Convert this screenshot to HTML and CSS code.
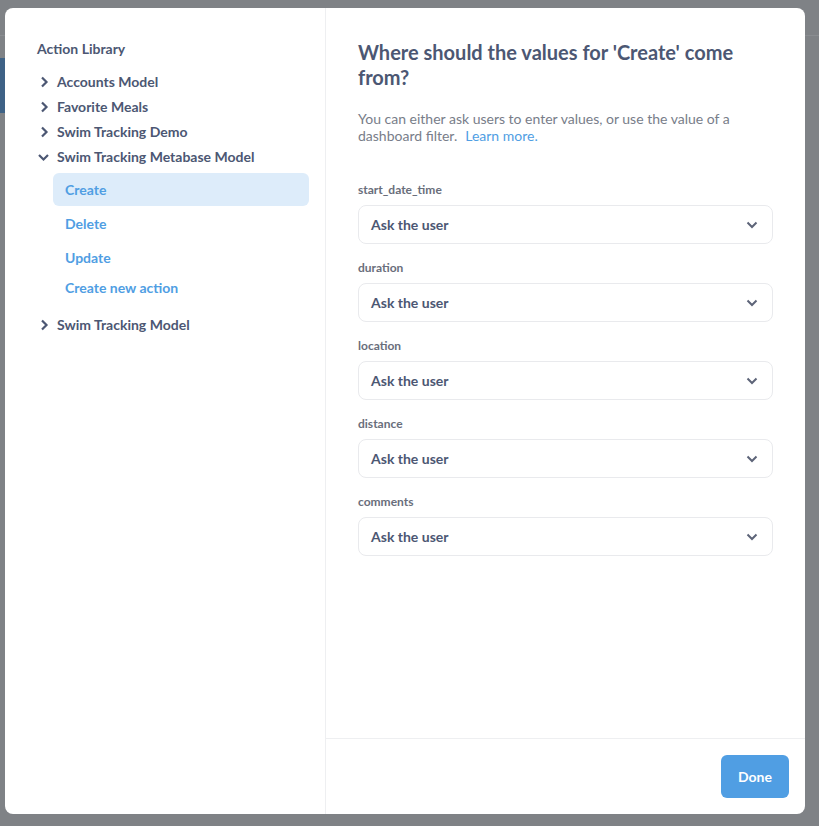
FILE: index.html
```html
<!DOCTYPE html>
<html>
<head>
<meta charset="utf-8">
<link rel="stylesheet" href="styles.css">
</head>
<body>
<div class="modal">
  <aside class="sidebar">
    <div class="sidebar-title">Action Library</div>
    <ul class="tree">
      <li class="tree-row"><svg class="chev" viewBox="0 0 12 12"><path d="M5 1.5l4.5 4.5-4.5 4.5" /></svg>Accounts Model</li>
      <li class="tree-row"><svg class="chev" viewBox="0 0 12 12"><path d="M5 1.5l4.5 4.5-4.5 4.5" /></svg>Favorite Meals</li>
      <li class="tree-row"><svg class="chev" viewBox="0 0 12 12"><path d="M5 1.5l4.5 4.5-4.5 4.5" /></svg>Swim Tracking Demo</li>
      <li class="tree-row"><svg class="chev" viewBox="0 0 12 12"><path d="M2 4l4.5 4.5 4.5-4.5" /></svg>Swim Tracking Metabase Model</li>
      <li class="sub">
        <div class="action selected">Create</div>
        <div class="action">Delete</div>
        <div class="action">Update</div>
        <div class="action new">Create new action</div>
      </li>
      <li class="tree-row last"><svg class="chev" viewBox="0 0 12 12"><path d="M5 1.5l4.5 4.5-4.5 4.5" /></svg>Swim Tracking Model</li>
    </ul>
  </aside>
  <section class="main">
    <div class="content">
      <h2 class="title">Where should the values for 'Create' come from?</h2>
      <p class="desc">You can either ask users to enter values, or use the value of a dashboard filter.<a class="link">Learn more.</a></p>
      <div class="fields">
        <div class="field">
          <div class="label">start_date_time</div>
          <div class="select"><span>Ask the user</span><svg class="down" viewBox="0 0 12 8"><path d="M1.5 1.5l4.5 4.5 4.5-4.5" /></svg></div>
        </div>
        <div class="field">
          <div class="label">duration</div>
          <div class="select"><span>Ask the user</span><svg class="down" viewBox="0 0 12 8"><path d="M1.5 1.5l4.5 4.5 4.5-4.5" /></svg></div>
        </div>
        <div class="field">
          <div class="label">location</div>
          <div class="select"><span>Ask the user</span><svg class="down" viewBox="0 0 12 8"><path d="M1.5 1.5l4.5 4.5 4.5-4.5" /></svg></div>
        </div>
        <div class="field">
          <div class="label">distance</div>
          <div class="select"><span>Ask the user</span><svg class="down" viewBox="0 0 12 8"><path d="M1.5 1.5l4.5 4.5 4.5-4.5" /></svg></div>
        </div>
        <div class="field">
          <div class="label">comments</div>
          <div class="select"><span>Ask the user</span><svg class="down" viewBox="0 0 12 8"><path d="M1.5 1.5l4.5 4.5 4.5-4.5" /></svg></div>
        </div>
      </div>
    </div>
    <footer class="footer">
      <button class="done">Done</button>
    </footer>
  </section>
</div>
</body>
</html>
```
FILE: styles.css
```css
html, body {
  margin: 0;
  padding: 0;
}
body {
  width: 819px;
  height: 826px;
  overflow: hidden;
  background:
    linear-gradient(#3e6286, #3e6286) 0 58px / 5px 55px no-repeat,
    linear-gradient(#8a8d91, #8a8d91) 0 35px / 819px 1px no-repeat,
    #7f8286;
  font-family: Lato, "Open Sans", sans-serif;
  color: #4c5773;
  padding: 8px 0 0 5px;
  box-sizing: border-box;
}
.modal {
  width: 800px;
  height: 806px;
  background: #fff;
  border-radius: 8px;
  display: flex;
  overflow: hidden;
}
.sidebar {
  width: 321px;
  flex: none;
  border-right: 1px solid #eeeff1;
  padding: 32px 16px 0 32px;
  box-sizing: border-box;
}
.sidebar-title {
  font-size: 14px;
  font-weight: 700;
  line-height: 17px;
  margin-bottom: 12px;
}
.tree {
  list-style: none;
  margin: 0;
  padding: 0;
}
.tree-row {
  display: flex;
  align-items: center;
  font-size: 14px;
  font-weight: 700;
  line-height: 25px;
  height: 25px;
}
.chev {
  width: 12px;
  height: 12px;
  margin-right: 8px;
  fill: none;
  stroke: #4c5773;
  stroke-width: 2.2;
}
.sub {
  display: flex;
  flex-direction: column;
  gap: 1px;
  margin: 4px 0 11px 16px;
}
.action {
  height: 33px;
  line-height: 33px;
  padding-left: 12px;
  font-size: 14px;
  font-weight: 700;
  color: #509ee3;
  border-radius: 6px;
}
.action.selected {
  background: #ddecfa;
}
.action.new {
  height: 26px;
  line-height: 26px;
}
.main {
  flex: 1;
  display: flex;
  flex-direction: column;
  min-width: 0;
}
.content {
  flex: 1;
  padding: 32px 32px 0 32px;
}
.title {
  margin: 0;
  font-size: 20px;
  line-height: 25px;
  font-weight: 700;
  color: #4c5773;
  width: 400px;
}
.desc {
  margin: 20px 0 0;
  font-size: 14px;
  line-height: 17px;
  color: #787d89;
  width: 400px;
}
.link {
  display: inline-block;
  color: #509ee3;
  margin-left: 8px;
}
.fields {
  margin-top: 37px;
  display: flex;
  flex-direction: column;
  gap: 15px;
}
.label {
  font-size: 12px;
  font-weight: 700;
  line-height: 15px;
  padding-top: 1px;
  color: #696e7b;
  margin-bottom: 8px;
}
.select {
  height: 39px;
  box-sizing: border-box;
  border: 1px solid #e9eaed;
  border-radius: 8px;
  display: flex;
  align-items: center;
  justify-content: space-between;
  padding: 0 14px 0 12px;
  font-size: 14px;
  font-weight: 700;
  color: #4c5773;
}
.down {
  width: 12px;
  height: 8px;
  fill: none;
  stroke: #5d6478;
  stroke-width: 2;
}
.footer {
  height: 76px;
  flex: none;
  border-top: 1px solid #eeeff1;
  box-sizing: border-box;
  display: flex;
  justify-content: flex-end;
  align-items: flex-start;
  padding: 16px 16px 0 0;
}
.done {
  background: #509ee3;
  border: none;
  border-radius: 6px;
  color: #fff;
  font-family: Lato, sans-serif;
  font-size: 14px;
  font-weight: 700;
  height: 43px;
  width: 68px;
  padding: 0;
}
```
